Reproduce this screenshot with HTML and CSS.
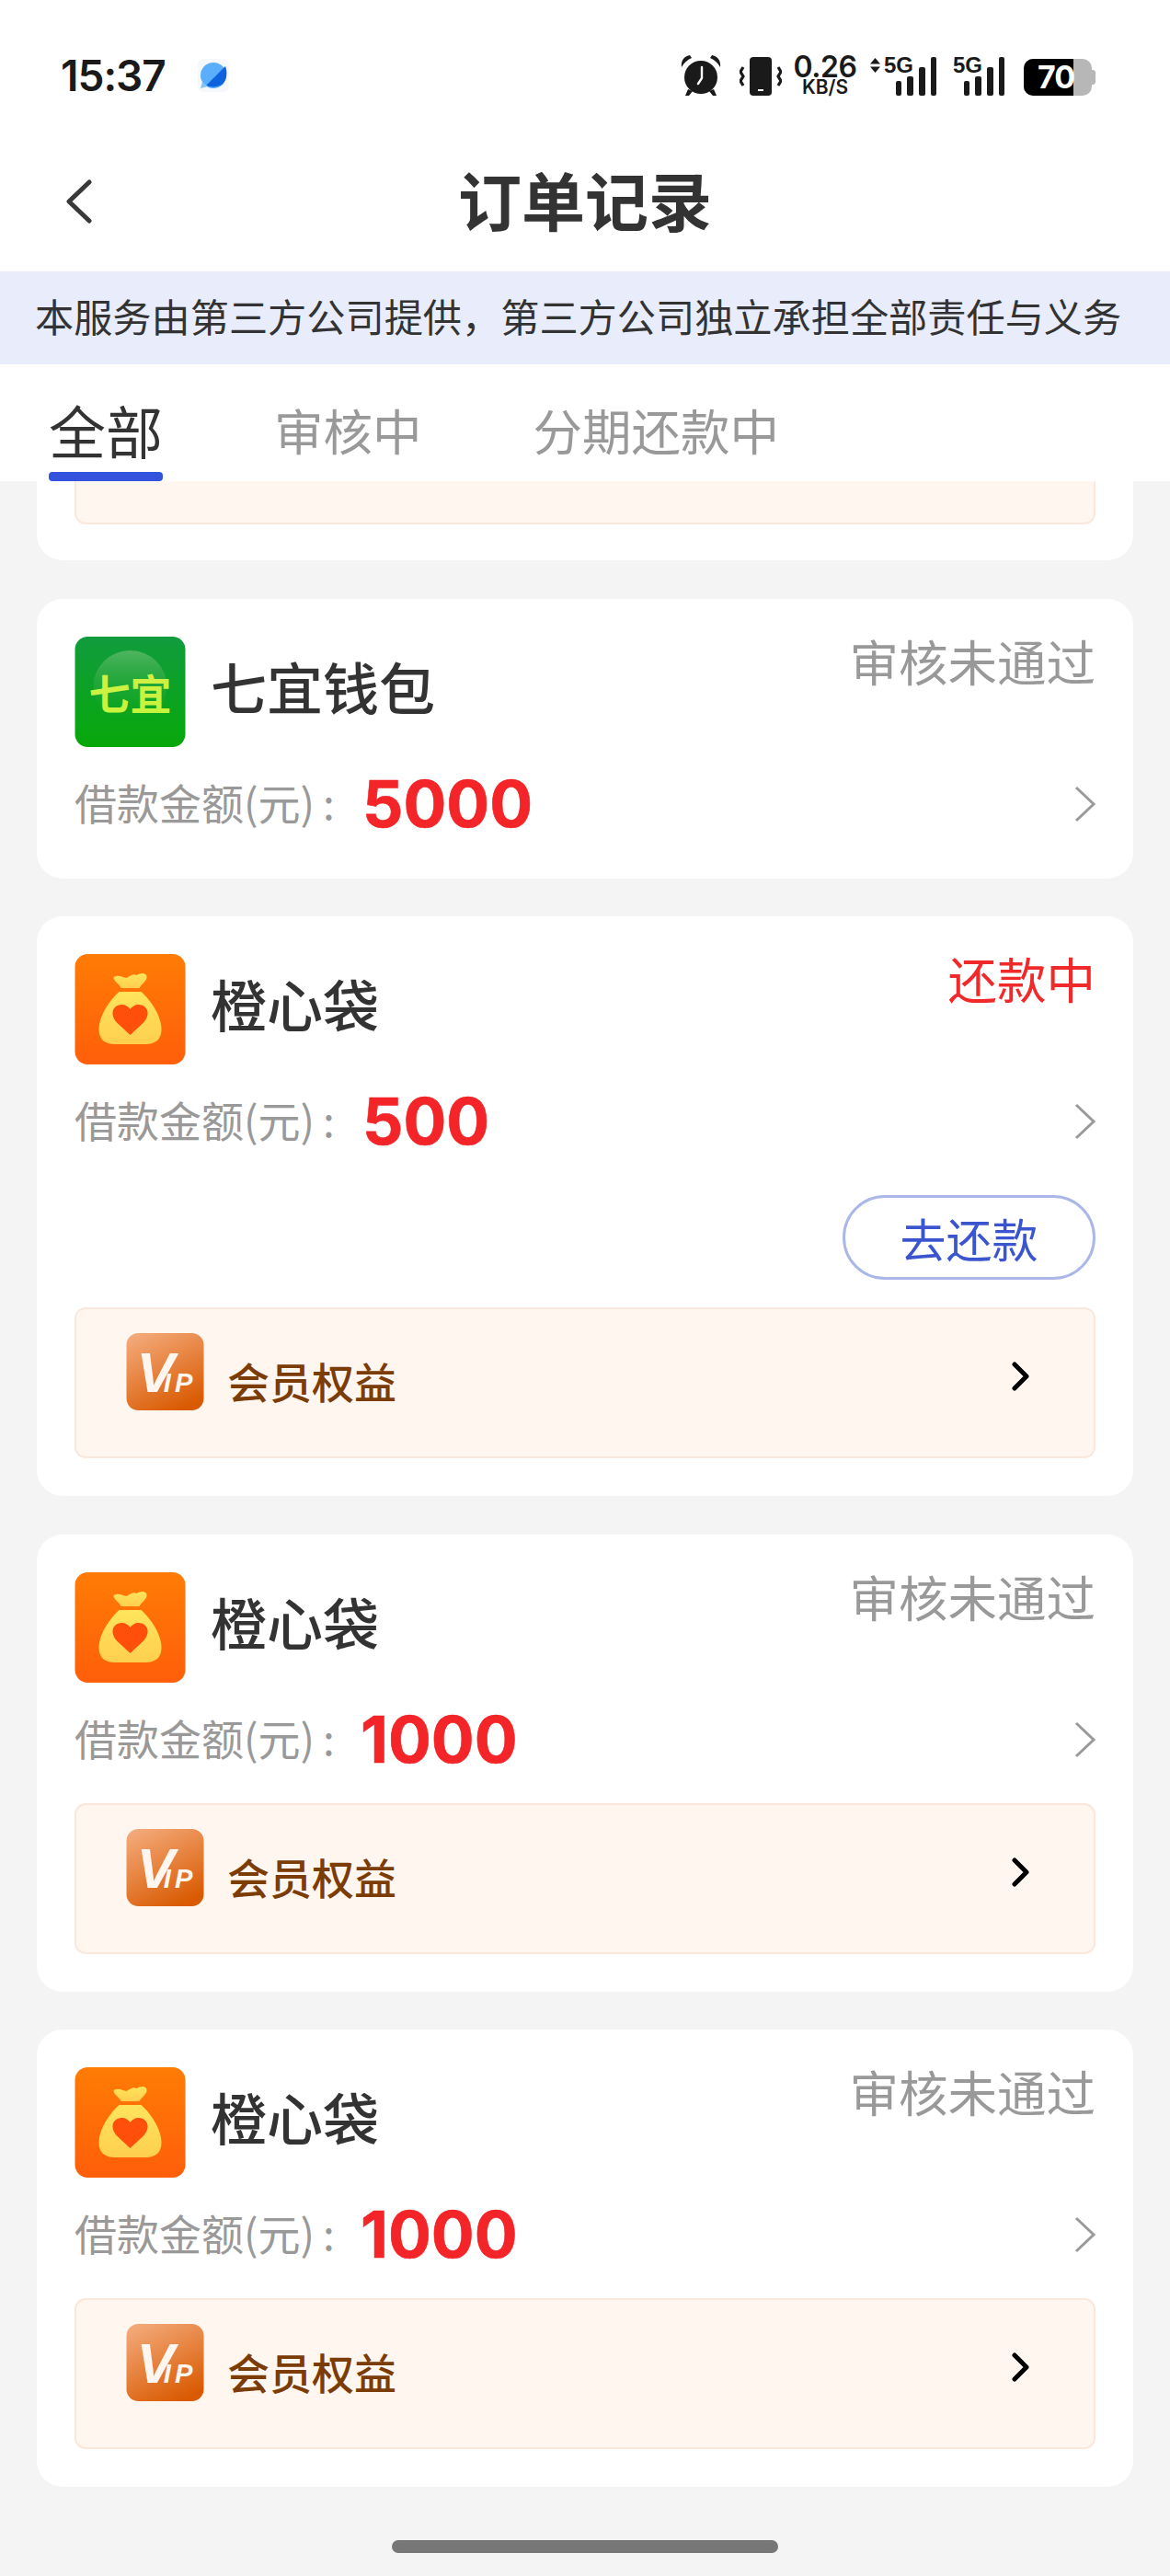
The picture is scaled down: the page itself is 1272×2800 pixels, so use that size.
FILE: index.html
```html
<!DOCTYPE html>
<html lang="zh-CN">
<head>
    <meta charset="UTF-8">
    <meta name="viewport" content="width=device-width, initial-scale=1.0">
    <title>订单记录</title>
    <link rel="stylesheet" href="styles.css">
</head>
<body>

    <!-- Shared icons -->
    <svg class="sprite" aria-hidden="true">
        <defs>
            <linearGradient id="bagBg" x1="0" y1="0" x2="0" y2="1">
                <stop offset="0" stop-color="#ff7c05"/>
                <stop offset="1" stop-color="#ff5e0a"/>
            </linearGradient>
            <linearGradient id="bagBody" x1="0" y1="0" x2="0" y2="1">
                <stop offset="0" stop-color="#ffe45c"/>
                <stop offset="1" stop-color="#ffcf50"/>
            </linearGradient>
            <linearGradient id="vipBg" x1="0.2" y1="0" x2="0.7" y2="1">
                <stop offset="0" stop-color="#f3a877"/>
                <stop offset="1" stop-color="#d95a02"/>
            </linearGradient>
            <linearGradient id="qiBg" x1="0" y1="0" x2="0" y2="1">
                <stop offset="0" stop-color="#119c3e"/>
                <stop offset="1" stop-color="#07a80a"/>
            </linearGradient>
            <linearGradient id="qiGlow" x1="0" y1="0" x2="0" y2="1">
                <stop offset="0" stop-color="#4fb45f"/>
                <stop offset="1" stop-color="#0fa32a" stop-opacity="0"/>
            </linearGradient>
            <linearGradient id="qiText" x1="0" y1="0" x2="0" y2="1">
                <stop offset="0" stop-color="#d2ee48"/>
                <stop offset="1" stop-color="#c4f53a"/>
            </linearGradient>
        </defs>
        <symbol id="bag" viewBox="0 0 120 120">
            <rect width="120" height="120" rx="14" fill="url(#bagBg)"/>
            <path d="M42 25c5-3 10 0 14 1 4-2 7-5 11-3 4-3 12-3 11 3-1 4-5 6-8 11H50c-2-5-8-7-8-12z" fill="url(#bagBody)"/>
            <path d="M48 41h24c10 9 22 26 22 41 0 11-7 16-17 16H43c-10 0-17-5-17-16 0-15 12-32 22-41z" fill="url(#bagBody)"/>
            <path d="M60 88 46 75c-4-4-5-8-5-11 0-5 4-9 10-9 4 0 7 2 9 5 2-3 5-5 9-5 6 0 10 4 10 9 0 3-1 7-5 11z" fill="#ff4f0a"/>
        </symbol>
        <symbol id="signal" viewBox="0 0 44 42">
            <rect x="0" y="26" width="6" height="16" rx="2"/>
            <rect x="12" y="21" width="7" height="21" rx="2"/>
            <rect x="25" y="11" width="7" height="31" rx="2"/>
            <rect x="38" y="0" width="6" height="42" rx="2"/>
        </symbol>
    </svg>

    <header class="top">
        <div class="status-bar">
            <div class="status-left">
                <span class="clock">15:37</span>
                <svg class="app-dot" viewBox="0 0 34 36">
                    <rect width="34" height="36" rx="6" fill="#f6f8fb"/>
                    <circle cx="17" cy="18" r="14" fill="#5aaefc"/>
                    <path d="M30 8c3 8 1 16-4 20-5 3-12 3-17 1z" fill="#0f62de"/>
                    <path d="M5 25 3 32l8-2z" fill="#7cc6fb"/>
                </svg>
            </div>
            <div class="status-right">
                <svg class="alarm" viewBox="0 0 44 44">
                    <circle cx="22" cy="24" r="18" fill="#1a1a1a"/>
                    <path d="M1 13C0 6 4 1 10 0l2 3C7 5 4 8 1 13zM43 13c1-7-3-12-9-13l-2 3c5 2 8 5 11 10z" fill="#1a1a1a"/>
                    <path d="m8 37-3 7h4l4-5zM36 37l3 7h-4l-4-5z" fill="#1a1a1a"/>
                    <path d="M23 13v12l-4 6" fill="none" stroke="#fff" stroke-width="2.4" stroke-linecap="round"/>
                </svg>
                <svg class="vibrate" viewBox="0 0 46 42">
                    <rect x="11" y="0" width="24" height="42" rx="4" fill="#1a1a1a"/>
                    <rect x="20" y="35" width="6" height="2" fill="#fff"/>
                    <path d="m4 11-3 5 3 5-3 5 3 5M42 11l3 5-3 5 3 5-3 5" fill="none" stroke="#1a1a1a" stroke-width="3.2"/>
                </svg>
                <div class="speed">
                    <span class="speed-num">0.26</span>
                    <span class="speed-unit">KB/S</span>
                </div>
                <div class="net net-first">
                    <svg class="updown" viewBox="0 0 11 16">
                        <path d="M5.5 0 11 6.5H0zM5.5 16 0 9.5h11z" fill="#1a1a1a"/>
                    </svg>
                    <span class="net-label">5G</span>
                    <svg class="bars"><use href="#signal"/></svg>
                </div>
                <div class="net">
                    <span class="net-label">5G</span>
                    <svg class="bars"><use href="#signal"/></svg>
                </div>
                <div class="battery">
                    <div class="battery-body">
                        <div class="battery-fill"></div>
                        <span class="battery-num">70</span>
                    </div>
                    <div class="battery-nub"></div>
                </div>
            </div>
        </div>
        <nav class="nav-bar">
            <svg class="back" viewBox="0 0 28 48">
                <path d="M25 3 3 24l22 21" fill="none" stroke="#383838" stroke-width="5" stroke-linecap="round" stroke-linejoin="round"/>
            </svg>
            <h1 class="title">订单记录</h1>
        </nav>
    </header>

    <div class="notice">本服务由第三方公司提供，第三方公司独立承担全部责任与义务</div>

    <div class="tabs">
        <div class="tab tab-active">全部</div>
        <div class="tab">审核中</div>
        <div class="tab">分期还款中</div>
    </div>

    <main class="list">
        <!-- card scrolled under the tabs, only its tail shows -->
        <section class="card card-cut">
            <div class="perk perk-cut"></div>
        </section>

        <section class="card">
            <div class="card-head">
                <svg class="app-icon" viewBox="0 0 120 120">
                    <rect width="120" height="120" rx="14" fill="url(#qiBg)"/>
                    <ellipse cx="60" cy="54" rx="40" ry="39" fill="url(#qiGlow)"/>
                    <text class="qi-text" x="60" y="80">七宜</text>
                </svg>
                <span class="app-name">七宜钱包</span>
                <span class="status">审核未通过</span>
            </div>
            <div class="amount-row">
                <span class="amount-label">借款金额(元)<span class="colon">:</span></span>
                <span class="amount">5000</span>
                <svg class="row-arrow" viewBox="0 0 24 40"><path d="m2 2 19 18L2 38" fill="none" stroke="#9a9a9a" stroke-width="3"/></svg>
            </div>
        </section>

        <section class="card">
            <div class="card-head">
                <svg class="app-icon"><use href="#bag"/></svg>
                <span class="app-name">橙心袋</span>
                <span class="status status-red">还款中</span>
            </div>
            <div class="amount-row">
                <span class="amount-label">借款金额(元)<span class="colon">:</span></span>
                <span class="amount">500</span>
                <svg class="row-arrow" viewBox="0 0 24 40"><path d="m2 2 19 18L2 38" fill="none" stroke="#9a9a9a" stroke-width="3"/></svg>
            </div>
            <div class="actions">
                <button class="repay">去还款</button>
            </div>
            <div class="perk">
                <svg class="vip-icon" viewBox="0 0 84 84">
                    <rect width="84" height="84" rx="13" fill="url(#vipBg)"/>
                    <text class="vip-mark" x="11" y="64"><tspan class="vip-big">V</tspan><tspan class="vip-small" dx="-12">IP</tspan></text>
                </svg>
                <span class="perk-text">会员权益</span>
                <svg class="perk-arrow" viewBox="0 0 20 32"><path d="m4 3 13 13L4 29" fill="none" stroke="#000" stroke-width="5" stroke-linecap="round" stroke-linejoin="round"/></svg>
            </div>
        </section>

        <section class="card">
            <div class="card-head">
                <svg class="app-icon"><use href="#bag"/></svg>
                <span class="app-name">橙心袋</span>
                <span class="status">审核未通过</span>
            </div>
            <div class="amount-row">
                <span class="amount-label">借款金额(元)<span class="colon">:</span></span>
                <span class="amount amount-tight">1000</span>
                <svg class="row-arrow" viewBox="0 0 24 40"><path d="m2 2 19 18L2 38" fill="none" stroke="#9a9a9a" stroke-width="3"/></svg>
            </div>
            <div class="perk">
                <svg class="vip-icon" viewBox="0 0 84 84">
                    <rect width="84" height="84" rx="13" fill="url(#vipBg)"/>
                    <text class="vip-mark" x="11" y="64"><tspan class="vip-big">V</tspan><tspan class="vip-small" dx="-12">IP</tspan></text>
                </svg>
                <span class="perk-text">会员权益</span>
                <svg class="perk-arrow" viewBox="0 0 20 32"><path d="m4 3 13 13L4 29" fill="none" stroke="#000" stroke-width="5" stroke-linecap="round" stroke-linejoin="round"/></svg>
            </div>
        </section>

        <section class="card">
            <div class="card-head">
                <svg class="app-icon"><use href="#bag"/></svg>
                <span class="app-name">橙心袋</span>
                <span class="status">审核未通过</span>
            </div>
            <div class="amount-row">
                <span class="amount-label">借款金额(元)<span class="colon">:</span></span>
                <span class="amount amount-tight">1000</span>
                <svg class="row-arrow" viewBox="0 0 24 40"><path d="m2 2 19 18L2 38" fill="none" stroke="#9a9a9a" stroke-width="3"/></svg>
            </div>
            <div class="perk">
                <svg class="vip-icon" viewBox="0 0 84 84">
                    <rect width="84" height="84" rx="13" fill="url(#vipBg)"/>
                    <text class="vip-mark" x="11" y="64"><tspan class="vip-big">V</tspan><tspan class="vip-small" dx="-12">IP</tspan></text>
                </svg>
                <span class="perk-text">会员权益</span>
                <svg class="perk-arrow" viewBox="0 0 20 32"><path d="m4 3 13 13L4 29" fill="none" stroke="#000" stroke-width="5" stroke-linecap="round" stroke-linejoin="round"/></svg>
            </div>
        </section>
    </main>

    <div class="home-bar"></div>

</body>
</html>
```

FILE: styles.css
```css
* {
    box-sizing: border-box;
}

html, body {
    margin: 0;
    padding: 0;
}

body {
    width: 1272px;
    height: 2800px;
    overflow: hidden;
    background-color: #f4f4f4;
    font-family: "Noto Sans CJK SC", "Noto Sans", sans-serif;
    color: #333;
}

.sprite {
    width: 0;
    height: 0;
    position: absolute;
}

/* Header */
.top {
    background-color: #fff;
    height: 295px;
}

.status-bar {
    height: 164px;
    padding: 0 81px 0 66px;
    display: flex;
    justify-content: space-between;
    align-items: center;
    color: #1a1a1a;
}

.status-left {
    display: flex;
    align-items: center;
    gap: 35px;
}

.clock {
    font-family: Inter, Roboto, sans-serif;
    font-size: 46px;
    font-weight: 600;
    letter-spacing: -1px;
    line-height: 52px;
}

.app-dot {
    width: 34px;
    height: 36px;
}

.status-right {
    display: flex;
    align-items: flex-end;
    height: 44px;
}

.alarm {
    width: 44px;
    height: 44px;
}

.vibrate {
    width: 46px;
    height: 42px;
    margin-left: 20px;
}

.speed {
    width: 70px;
    margin-left: 12px;
    display: flex;
    flex-direction: column;
    align-items: center;
    font-family: Inter, Roboto, sans-serif;
}

.speed-num {
    font-size: 32px;
    font-weight: 600;
    letter-spacing: -0.5px;
    line-height: 26px;
}

.speed-unit {
    font-size: 21px;
    font-weight: 600;
    line-height: 18px;
}

.net {
    position: relative;
    width: 56px;
    height: 42px;
}

.net-first {
    width: 72px;
    margin-left: 14px;
    margin-right: 18px;
}

.bars {
    position: absolute;
    right: 0;
    bottom: 0;
    width: 44px;
    height: 42px;
    fill: #1a1a1a;
}

.net-label {
    position: absolute;
    left: 0;
    top: -3px;
    font-family: "Liberation Sans Narrow", "Liberation Sans", sans-serif;
    font-size: 24px;
    font-weight: 700;
    line-height: 24px;
}

.net-first .net-label {
    left: 15px;
}

.updown {
    position: absolute;
    left: 0;
    top: 1px;
    width: 11px;
    height: 16px;
}

.battery {
    display: flex;
    align-items: center;
    margin-left: 21px;
    height: 40px;
}

.battery-body {
    position: relative;
    width: 74px;
    height: 40px;
    border-radius: 10px;
    overflow: hidden;
    background-color: #b7b7b7;
}

.battery-fill {
    width: 54px;
    height: 40px;
    background-color: #000;
}

.battery-num {
    position: absolute;
    left: 15px;
    top: 0;
    font-family: Inter, Roboto, sans-serif;
    font-size: 34px;
    font-weight: 700;
    line-height: 40px;
    letter-spacing: -1px;
    color: #fff;
}

.battery-nub {
    width: 4px;
    height: 16px;
    border-radius: 0 3px 3px 0;
    background-color: #b7b7b7;
}

.nav-bar {
    position: relative;
    height: 114px;
    padding-bottom: 10px;
    display: flex;
    align-items: center;
    justify-content: center;
}

.back {
    position: absolute;
    left: 72px;
    top: 31px;
    width: 28px;
    height: 48px;
}

.title {
    margin: 0;
    font-size: 69px;
    font-weight: 700;
    line-height: 104px;
    color: #333;
}

/* Notice */
.notice {
    height: 101px;
    padding-left: 38px;
    background-color: #e8ecfb;
    font-size: 42.2px;
    line-height: 95px;
    white-space: nowrap;
    color: #333;
}

/* Tabs */
.tabs {
    height: 127px;
    padding: 37px 0 0 53px;
    display: flex;
    gap: 121px;
    background-color: #fff;
}

.tab {
    font-size: 53.5px;
    line-height: 68px;
    color: #999;
}

.tab-active {
    width: 124px;
    font-size: 62px;
    text-align: center;
    color: #333;
}

.tab-active::after {
    content: "";
    display: block;
    height: 10px;
    margin-top: 12px;
    border-radius: 4px;
    background-color: #3353dd;
}

/* Order cards */
.list {
    padding: 0 40px;
    display: flex;
    flex-direction: column;
    gap: 41.5px;
}

.card {
    background-color: #fff;
    border-radius: 28px;
    padding: 41px 41px 29px 41px;
}

.card-cut {
    padding-top: 0;
    padding-bottom: 39px;
    border-radius: 0 0 28px 28px;
}

.card-head {
    display: flex;
    align-items: flex-start;
    height: 120px;
}

.app-icon {
    width: 121px;
    height: 120px;
    flex-shrink: 0;
}

.qi-text {
    font-family: "Noto Sans CJK SC", sans-serif;
    font-size: 45px;
    font-weight: 700;
    text-anchor: middle;
    fill: url(#qiText);
}

.app-name {
    margin-left: 27px;
    font-size: 61px;
    font-weight: 500;
    line-height: 108px;
    color: #333;
}

.status {
    margin-left: auto;
    font-size: 53.5px;
    line-height: 52px;
    color: #999;
}

.status-red {
    color: #f02a2a;
}

.amount-row {
    display: flex;
    align-items: center;
    height: 104px;
    margin-top: 10px;
}

.amount-label {
    width: 313px;
    margin-bottom: 6px;
    font-size: 46px;
    line-height: 60px;
    white-space: nowrap;
    color: #999;
}

.colon {
    margin-left: 9px;
}

.amount {
    font-family: Inter, Roboto, sans-serif;
    font-size: 69.5px;
    font-weight: 700;
    line-height: 80px;
    -webkit-text-stroke: 0.6px #f32528;
    color: #f32528;
}

.amount-tight {
    margin-left: -2px;
}

.row-arrow {
    margin-left: auto;
    margin-right: -1px;
    width: 24px;
    height: 40px;
}

.actions {
    display: flex;
    justify-content: flex-end;
    margin: 28px 0 30px;
}

.repay {
    width: 275px;
    height: 92px;
    padding: 0;
    background-color: #fff;
    border: 3px solid #aab7e8;
    border-radius: 46px;
    font-family: inherit;
    font-size: 50px;
    color: #3a55cf;
}

.perk {
    height: 164px;
    margin: 17px 0 12px;
    padding-left: 54px;
    display: flex;
    align-items: center;
    background-color: #fff6f0;
    border: 2px solid #f9e8db;
    border-radius: 12px;
}

.perk-cut {
    height: 47px;
    margin: 0;
    border-top: 0;
    border-radius: 0 0 12px 12px;
}

.vip-icon {
    width: 85px;
    height: 84px;
    margin-bottom: 24px;
}

.vip-mark {
    font-family: "Liberation Sans", sans-serif;
    font-weight: 700;
    font-style: italic;
    fill: #fff6ef;
}

.vip-big {
    font-size: 62px;
}

.vip-small {
    font-size: 29px;
    letter-spacing: 4px;
}

.perk-text {
    margin-left: 25px;
    margin-bottom: 6px;
    font-size: 46px;
    font-weight: 500;
    color: #7c3c05;
}

.perk-arrow {
    margin-left: auto;
    margin-right: 70px;
    margin-bottom: 14px;
    width: 20px;
    height: 32px;
}

.home-bar {
    position: absolute;
    left: 426px;
    top: 2761px;
    width: 420px;
    height: 14px;
    border-radius: 7px;
    background-color: #777;
}
```
